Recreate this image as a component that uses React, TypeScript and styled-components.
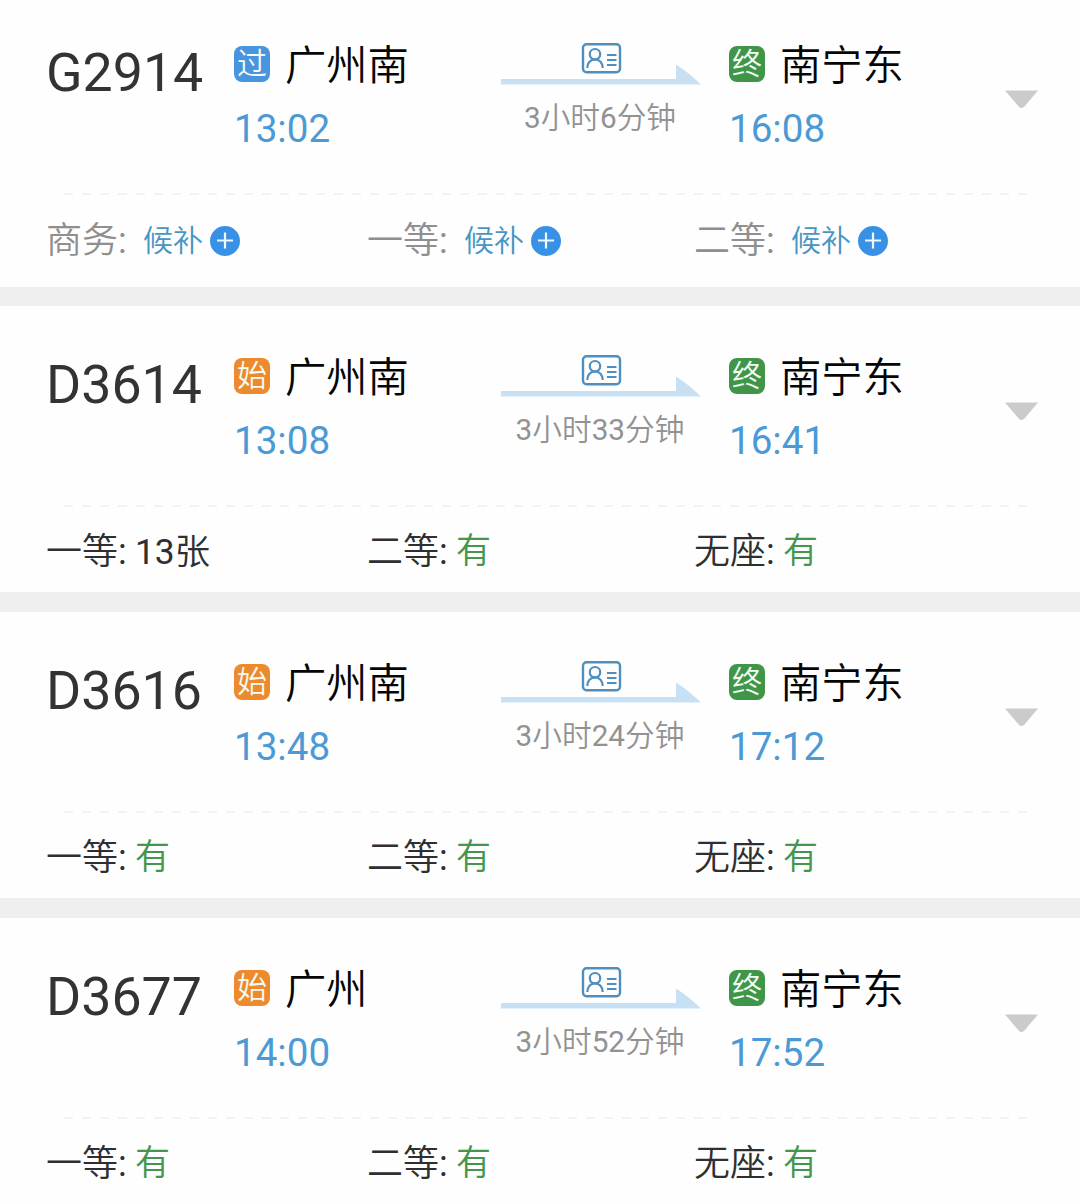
import React from 'react';
import styled, { createGlobalStyle } from 'styled-components';

const GlobalStyle = createGlobalStyle`
  * { box-sizing: border-box; }
  body {
    margin: 0;
    background: #efeff0;
    font-family: Roboto, "Noto Sans CJK SC", sans-serif;
    overflow: hidden;
  }
`;

const List = styled.main`
  display: flex;
  flex-direction: column;
  width: 1080px;
  height: 1203px;
  overflow: hidden;
`;

const Card = styled.article<{ $first: boolean }>`
  flex: none;
  height: ${(p) => (p.$first ? 287 : 286)}px;
  margin-bottom: ${(p) => (p.$first ? 19 : 20)}px;
  padding: 0 42px 0 46px;
  background: #fefefe;
`;

const Summary = styled.div<{ $first: boolean }>`
  display: grid;
  grid-template-columns: 188px 267px 200px 28px 276px 33px;
  align-items: start;
  height: ${(p) => (p.$first ? 193 : 199)}px;
  padding-top: ${(p) => (p.$first ? 35 : 41)}px;
`;

const TrainNo = styled.h2`
  margin: 6px 0 0;
  font-size: 53.7px;
  line-height: 64px;
  font-weight: 400;
  color: #333335;
`;

const Stop = styled.div`
  display: flex;
  flex-direction: column;
`;

const StationRow = styled.div`
  display: flex;
  align-items: center;
  gap: 15px;
  height: 58px;
`;

const Badge = styled.span<{ $color: string }>`
  display: flex;
  align-items: center;
  justify-content: center;
  width: 36px;
  height: 36px;
  border-radius: 8px;
  background: ${(p) => p.$color};
  color: #f4fbf4;
  font-size: 30px;
  line-height: 36px;
  font-weight: 350;
`;

const Station = styled.span`
  padding-top: 3px;
  font-size: 41.3px;
  line-height: 58px;
  font-weight: 350;
  color: #050505;
`;

const Time = styled.time`
  margin-top: 10px;
  font-size: 38.6px;
  line-height: 52px;
  color: #4c9ad5;
`;

const Journey = styled.div`
  display: flex;
  flex-direction: column;
  align-items: center;
`;

const Route = styled.svg`
  display: block;
  width: 200px;
  height: 46px;
  margin-top: 6px;
`;

const Duration = styled.span`
  margin: 13px 2px 0 0;
  font-size: 29.7px;
  line-height: 36px;
  font-weight: 350;
  color: #929292;
  white-space: nowrap;
`;

const Latin = styled.span`
  font-weight: 400;
`;

const Chevron = styled.svg`
  width: 33px;
  height: 19px;
  margin-top: 55px;
`;

const Divider = styled.div`
  height: 2px;
  margin: 0 8px 0 18px;
  background: repeating-linear-gradient(90deg, #f3f3f3 0 9px, transparent 9px 18px);
`;

const Seats = styled.div<{ $first: boolean }>`
  display: grid;
  grid-template-columns: 321px 327px 1fr;
  padding-top: ${(p) => (p.$first ? 21 : 20)}px;
`;

const Seat = styled.div<{ $muted: boolean }>`
  display: flex;
  align-items: center;
  height: 50px;
  font-size: 36px;
  line-height: 50px;
  font-weight: 350;
  color: ${(p) => (p.$muted ? '#8f8f8f' : '#2f2f31')};
  white-space: nowrap;
`;

const SeatLabel = styled.span`
  width: 89px;
`;

const Count = styled.span`
  font-size: 35.3px;
`;

const Available = styled.span`
  font-size: 35px;
  color: #43964b;
`;

const Waitlist = styled.span`
  display: flex;
  align-items: center;
  gap: 7px;
  margin-left: 8px;
  font-size: 30px;
  color: #4596c4;
`;

const Plus = styled.svg`
  width: 30px;
  height: 30px;
`;

const BADGES: Record<string, string> = { 过: '#4894df', 始: '#ec8a2d', 终: '#3f9649' };

type SeatInfo = { label: string; left: 'wait' | 'yes' | number };
type Train = {
  no: string;
  badge: string;
  from: string;
  dep: string;
  arr: string;
  hours: number;
  minutes: number;
  seats: SeatInfo[];
};

const open: SeatInfo[] = [
  { label: '一等', left: 'yes' },
  { label: '二等', left: 'yes' },
  { label: '无座', left: 'yes' },
];

const trains: Train[] = [
  {
    no: 'G2914', badge: '过', from: '广州南', dep: '13:02', arr: '16:08', hours: 3, minutes: 6,
    seats: [
      { label: '商务', left: 'wait' },
      { label: '一等', left: 'wait' },
      { label: '二等', left: 'wait' },
    ],
  },
  {
    no: 'D3614', badge: '始', from: '广州南', dep: '13:08', arr: '16:41', hours: 3, minutes: 33,
    seats: [{ label: '一等', left: 13 }, open[1], open[2]],
  },
  { no: 'D3616', badge: '始', from: '广州南', dep: '13:48', arr: '17:12', hours: 3, minutes: 24, seats: open },
  { no: 'D3677', badge: '始', from: '广州', dep: '14:00', arr: '17:52', hours: 3, minutes: 52, seats: open },
];

function RouteArrow() {
  return (
    <Route viewBox="0 0 200 46" fill="none">
      <path d="M0 38H175V23.5Q187 31 200 43.5H0Z" fill="#c8e0f4" />
      <rect x="82" y="3.2" width="37" height="28" rx="3.5" stroke="#4f8fc0" strokeWidth="2.4" />
      <circle cx="94" cy="13.2" r="5.2" stroke="#4f8fc0" strokeWidth="2.2" />
      <path d="M86.3 27C86.3 22 89.5 18.4 94 18.4S101.7 22 101.7 27" stroke="#4f8fc0" strokeWidth="2.2" />
      <path d="M106 14H115.5M106 19H115.5M106 24H115.5" stroke="#4f8fc0" strokeWidth="1.8" />
    </Route>
  );
}

function SeatCell({ seat }: { seat: SeatInfo }) {
  return (
    <Seat $muted={seat.left === 'wait'}>
      <SeatLabel>
        {seat.label}
        <Latin>:</Latin>
      </SeatLabel>
      {seat.left === 'wait' && (
        <Waitlist>
          候补
          <Plus viewBox="0 0 30 30">
            <circle cx="15" cy="15" r="15" fill="#3991e6" />
            <path d="M7 14.5H23M15 6.5V22.5" stroke="#f2fbff" strokeWidth="2.2" />
          </Plus>
        </Waitlist>
      )}
      {seat.left === 'yes' && <Available>有</Available>}
      {typeof seat.left === 'number' && (
        <Count>
          <Latin>{seat.left}</Latin>张
        </Count>
      )}
    </Seat>
  );
}

export default function App() {
  return (
    <>
      <GlobalStyle />
      <List>
        {trains.map((t, i) => (
          <Card key={t.no} $first={i === 0}>
            <Summary $first={i === 0}>
              <TrainNo>{t.no}</TrainNo>
              <Stop>
                <StationRow>
                  <Badge $color={BADGES[t.badge]}>{t.badge}</Badge>
                  <Station>{t.from}</Station>
                </StationRow>
                <Time>{t.dep}</Time>
              </Stop>
              <Journey>
                <RouteArrow />
                <Duration>
                  <Latin>{t.hours}</Latin>小时<Latin>{t.minutes}</Latin>分钟
                </Duration>
              </Journey>
              <span />
              <Stop>
                <StationRow>
                  <Badge $color={BADGES['终']}>终</Badge>
                  <Station>南宁东</Station>
                </StationRow>
                <Time>{t.arr}</Time>
              </Stop>
              <Chevron viewBox="0 0 33 19">
                <path d="M0 0.5H33L19 17Q16.5 19 14 17Z" fill="#cbcbcb" />
              </Chevron>
            </Summary>
            <Divider />
            <Seats $first={i === 0}>
              {t.seats.map((s) => (
                <SeatCell key={s.label} seat={s} />
              ))}
            </Seats>
          </Card>
        ))}
      </List>
    </>
  );
}
